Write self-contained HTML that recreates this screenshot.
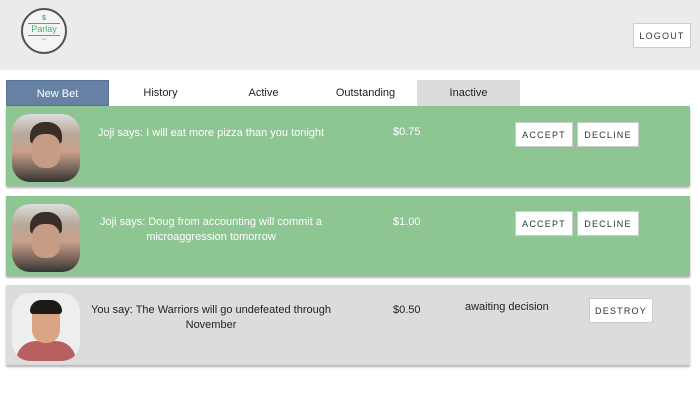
<!DOCTYPE html>
<html><head><style>
*{margin:0;padding:0;box-sizing:border-box}
body{width:700px;height:400px;background:#fff;font-family:"Liberation Sans",sans-serif;position:relative;overflow:hidden}
.hdr{position:absolute;left:0;top:0;width:700px;height:70px;background:#ebebeb}
.logo{position:absolute;left:21px;top:8px;width:46px;height:46px;border:2px solid #555;border-radius:50%;background:#f4f4f4;text-align:center}
.logo .d{color:#4caf6a;font-size:7px;font-weight:bold;margin-top:5px;line-height:7px}
.logo .p{color:#4caf6a;font-size:9px;border-top:1px solid #888;border-bottom:1px solid #888;margin:1px 5px;line-height:11px}
.btn{position:absolute;background:#fff;border:1px solid #ccc;color:#333;font-size:9px;letter-spacing:1.2px;text-align:center;line-height:24px;height:25px}
.tab{position:absolute;top:80px;height:26px;line-height:26px;text-align:center;font-size:11px;color:#222;width:103px}
.card{position:absolute;left:6px;width:684px;height:80px;box-shadow:0 2px 2px rgba(0,0,0,.3)}
.g{background:#8dc593;color:#fff}
.gr{background:#dcdcdc;color:#222}
.av{position:absolute;left:6px;top:8px;width:68px;height:68px;border-radius:18px;overflow:hidden}
.txt{position:absolute;left:80px;width:250px;text-align:center;font-size:11px;line-height:15px}
.pr{position:absolute;font-size:11px}
</style></head><body>
<div class="hdr">
<div class="logo"><div class="d">$</div><div class="p">Parlay</div><div style="font-size:3px;color:#888">est.</div></div>
<div class="btn" style="left:633px;top:23px;width:58px">LOGOUT</div>
</div>
<div class="tab" style="left:6px;background:#6681a4;color:#fff;border:1px solid #587295">New Bet</div>
<div class="tab" style="left:109px">History</div>
<div class="tab" style="left:212px">Active</div>
<div class="tab" style="left:314px">Outstanding</div>
<div class="tab" style="left:417px;background:#dcdcdc">Inactive</div>

<div class="card g" style="top:106px">
<div class="av" style="background:linear-gradient(180deg,#ddd 0,#b8a89a 30%,#c9a08a 55%,#6a5a50 85%,#333 100%)"><div style="position:absolute;left:18px;top:8px;width:32px;height:22px;background:#3a2e28;border-radius:14px 14px 4px 4px"></div><div style="position:absolute;left:20px;top:20px;width:28px;height:34px;background:#c69c86;border-radius:12px"></div></div>
<div class="txt" style="top:20px">Joji says: I will eat more pizza than you tonight</div>
<div class="pr" style="left:387px;top:20px">$0.75</div>
<div class="btn" style="left:509px;top:16px;width:58px">ACCEPT</div>
<div class="btn" style="left:571px;top:16px;width:62px">DECLINE</div>
</div>

<div class="card g" style="top:196px">
<div class="av" style="background:linear-gradient(180deg,#ddd 0,#b8a89a 30%,#c9a08a 55%,#6a5a50 85%,#333 100%)"><div style="position:absolute;left:18px;top:8px;width:32px;height:22px;background:#3a2e28;border-radius:14px 14px 4px 4px"></div><div style="position:absolute;left:20px;top:20px;width:28px;height:34px;background:#c69c86;border-radius:12px"></div></div>
<div class="txt" style="top:19px">Joji says: Doug from accounting will commit a microaggression tomorrow</div>
<div class="pr" style="left:387px;top:20px">$1.00</div>
<div class="btn" style="left:509px;top:15px;width:58px">ACCEPT</div>
<div class="btn" style="left:571px;top:15px;width:62px">DECLINE</div>
</div>

<div class="card gr" style="top:285px">
<div class="av" style="background:#eee"><div style="position:absolute;left:4px;top:48px;width:60px;height:30px;background:#b86060;border-radius:20px 20px 0 0"></div><div style="position:absolute;left:20px;top:10px;width:28px;height:40px;background:#d9a584;border-radius:13px"></div><div style="position:absolute;left:18px;top:7px;width:32px;height:14px;background:#1e1a18;border-radius:14px 14px 4px 4px"></div></div>
<div class="txt" style="top:18px">You say: The Warriors will go undefeated through November</div>
<div class="pr" style="left:387px;top:19px">$0.50</div>
<div class="pr" style="left:459px;top:16px">awaiting decision</div>
<div class="btn" style="left:583px;top:13px;width:64px">DESTROY</div>
</div>
</body></html>
